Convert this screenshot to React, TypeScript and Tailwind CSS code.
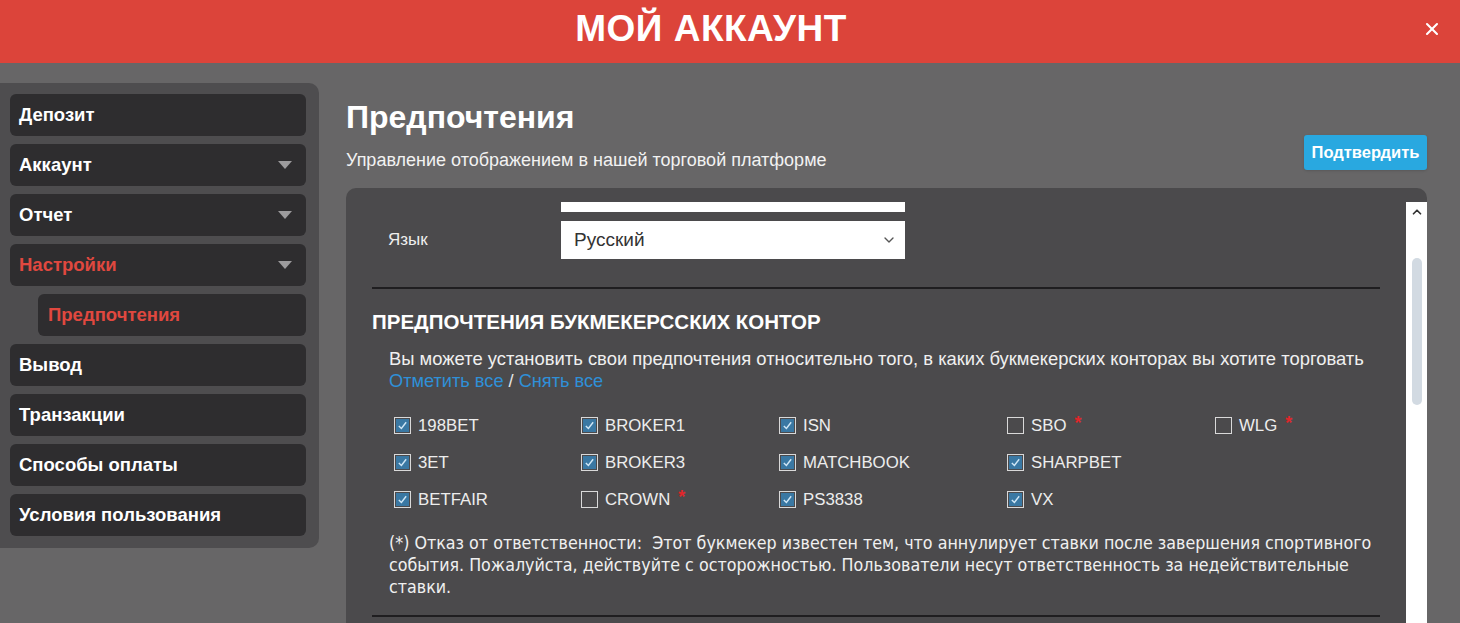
import { X, ChevronDown, ChevronUp } from "lucide-react";

type Book = { name: string; checked: boolean; warn?: boolean };

const menu = [
  { label: "Депозит" },
  { label: "Аккаунт", arrow: true },
  { label: "Отчет", arrow: true },
  { label: "Настройки", arrow: true, active: true },
  { label: "Предпочтения", sub: true, active: true },
  { label: "Вывод" },
  { label: "Транзакции" },
  { label: "Способы оплаты" },
  { label: "Условия пользования" },
];

const columns: { width: string; items: Book[] }[] = [
  {
    width: "w-[187px]",
    items: [
      { name: "198BET", checked: true },
      { name: "3ET", checked: true },
      { name: "BETFAIR", checked: true },
    ],
  },
  {
    width: "w-[198px]",
    items: [
      { name: "BROKER1", checked: true },
      { name: "BROKER3", checked: true },
      { name: "CROWN", checked: false, warn: true },
    ],
  },
  {
    width: "w-[228px]",
    items: [
      { name: "ISN", checked: true },
      { name: "MATCHBOOK", checked: true },
      { name: "PS3838", checked: true },
    ],
  },
  {
    width: "w-[208px]",
    items: [
      { name: "SBO", checked: false, warn: true },
      { name: "SHARPBET", checked: true },
      { name: "VX", checked: true },
    ],
  },
  {
    width: "w-[160px]",
    items: [{ name: "WLG", checked: false, warn: true }],
  },
];

function Checkbox({ checked }: { checked: boolean }) {
  return (
    <span className="flex h-[17px] w-[17px] shrink-0 items-center justify-center border-[1.5px] border-[#d9d9d9] bg-[#4b4a4c]">
      {checked && (
        <span className="flex h-[13px] w-[13px] items-center justify-center bg-[#3a78a3]">
          <svg viewBox="0 0 12 12" className="h-[11px] w-[11px]">
            <path d="M2 6.5 L4.8 9.2 L10 2.5" fill="none" stroke="#cfe6f5" strokeWidth="1.6" />
          </svg>
        </span>
      )}
    </span>
  );
}

export default function App() {
  return (
    <div
      className="flex h-[623px] w-[1460px] flex-col overflow-hidden bg-[#676667] text-white"
      style={{ fontFamily: '"Liberation Sans", Arial, sans-serif' }}
    >
      <header className="relative flex h-[63px] shrink-0 items-center justify-center bg-[#dc443a] pb-[6px] pr-[38px]">
        <h1 className="text-[37px] font-bold tracking-[0.5px]">МОЙ АККАУНТ</h1>
        <X className="absolute right-[18px] top-[19px] h-[20px] w-[20px]" strokeWidth={2.5} />
      </header>

      <div className="flex flex-1">
        <aside className="w-[319px] shrink-0 pt-[20px]">
          <nav className="flex flex-col gap-[8px] rounded-r-[10px] bg-[#4e4d4f] pb-[12px] pl-[10px] pr-[13px] pt-[11px]">
            {menu.map((m) => (
              <div
                key={m.label}
                className={`flex h-[42px] items-center justify-between rounded-[6px] bg-[#2e2d2f] pr-[14px] ${
                  m.sub ? "ml-[28px] pl-[10px]" : "pl-[9px]"
                }`}
              >
                <span
                  className={`text-[18.5px] font-bold ${m.active ? "text-[#e0483f]" : "text-white"}`}
                >
                  {m.label}
                </span>
                {m.arrow && (
                  <span className="h-0 w-0 border-x-[7px] border-t-[8px] border-x-transparent border-t-[#9c9b9d]" />
                )}
              </div>
            ))}
          </nav>
        </aside>

        <main className="flex flex-1 flex-col pl-[27px] pr-[33px]">
          <div className="flex items-start justify-between">
            <div className="pt-[36px]">
              <h2 className="text-[32px] font-bold leading-[36px]">Предпочтения</h2>
              <p className="mt-[15px] text-[18px] leading-[20px] text-[#f2f2f2]">
                Управление отображением в нашей торговой платформе
              </p>
            </div>
            <button className="mt-[72px] h-[35px] w-[123px] rounded-[3px] bg-[#29a8e0] text-[16.5px] font-semibold text-white shadow">
              Подтвердить
            </button>
          </div>

          <section className="mt-[18px] flex flex-1 rounded-t-[10px] bg-[#4b4a4c]">
            <div className="flex-1 pl-[26px] pr-[26px] pt-[14px]">
              <div className="ml-[189px] h-[10px] w-[344px] bg-white" />
              <div className="mt-[9px] flex items-center">
                <span className="w-[189px] pl-[16px] text-[17px] text-[#eeeeee]">Язык</span>
                <div className="flex h-[38px] w-[344px] items-center justify-between bg-white pl-[13px] pr-[8px] text-[19px] text-[#333]">
                  <span>Русский</span>
                  <ChevronDown className="h-[16px] w-[16px] text-[#555]" />
                </div>
              </div>

              <div className="mt-[28px] h-[2px] bg-[#1f1e20]" />

              <h3 className="mt-[21px] text-[20.5px] font-bold leading-[24px]">
                ПРЕДПОЧТЕНИЯ БУКМЕКЕРССКИХ КОНТОР
              </h3>

              <div className="pl-[17px]">
                <p className="mt-[14px] whitespace-nowrap text-[18.4px] leading-[22px] text-[#f0f0f0]">
                  Вы можете установить свои предпочтения относительно того, в каких букмекерских конторах вы хотите торговать
                </p>
                <p className="text-[18.2px] leading-[22px] text-[#2f90d8]">
                  Отметить все <span className="text-[#e5e5e5]">/</span> Снять все
                </p>

                <div className="mt-[15px] flex pl-[5px]">
                  {columns.map((c, i) => (
                    <div key={i} className={`flex flex-col ${c.width}`}>
                      {c.items.map((b) => (
                        <div key={b.name} className="flex h-[37px] items-center gap-[7px]">
                          <Checkbox checked={b.checked} />
                          <span className="text-[16.8px] text-[#ededed]">{b.name}</span>
                          {b.warn && (
                            <span className="mb-[6px] ml-[1px] text-[18px] font-bold leading-none text-[#e0262a]">*</span>
                          )}
                        </div>
                      ))}
                    </div>
                  ))}
                </div>

                <p
                  className="mt-[14px] whitespace-nowrap text-[17.7px] leading-[22px] text-[#f0f0f0]"
                  style={{ fontFamily: '"Liberation Sans Narrow", "DejaVu Sans Condensed", sans-serif' }}
                >
                  (*) Отказ от ответственности:&nbsp; Этот букмекер известен тем, что аннулирует ставки после завершения спортивного
                  <br />
                  события. Пожалуйста, действуйте с осторожностью. Пользователи несут ответственность за недействительные
                  <br />
                  ставки.
                </p>
              </div>

              <div className="mt-[17px] h-[2px] bg-[#1f1e20]" />
            </div>

            <div className="mt-[14px] flex w-[21px] shrink-0 flex-col items-center bg-white">
              <ChevronUp className="mt-[3px] h-[14px] w-[14px] text-[#333]" strokeWidth={3} />
              <div className="mt-[39px] h-[147px] w-[10px] rounded-full bg-[#d2dae2]" />
            </div>
          </section>
        </main>
      </div>
    </div>
  );
}
